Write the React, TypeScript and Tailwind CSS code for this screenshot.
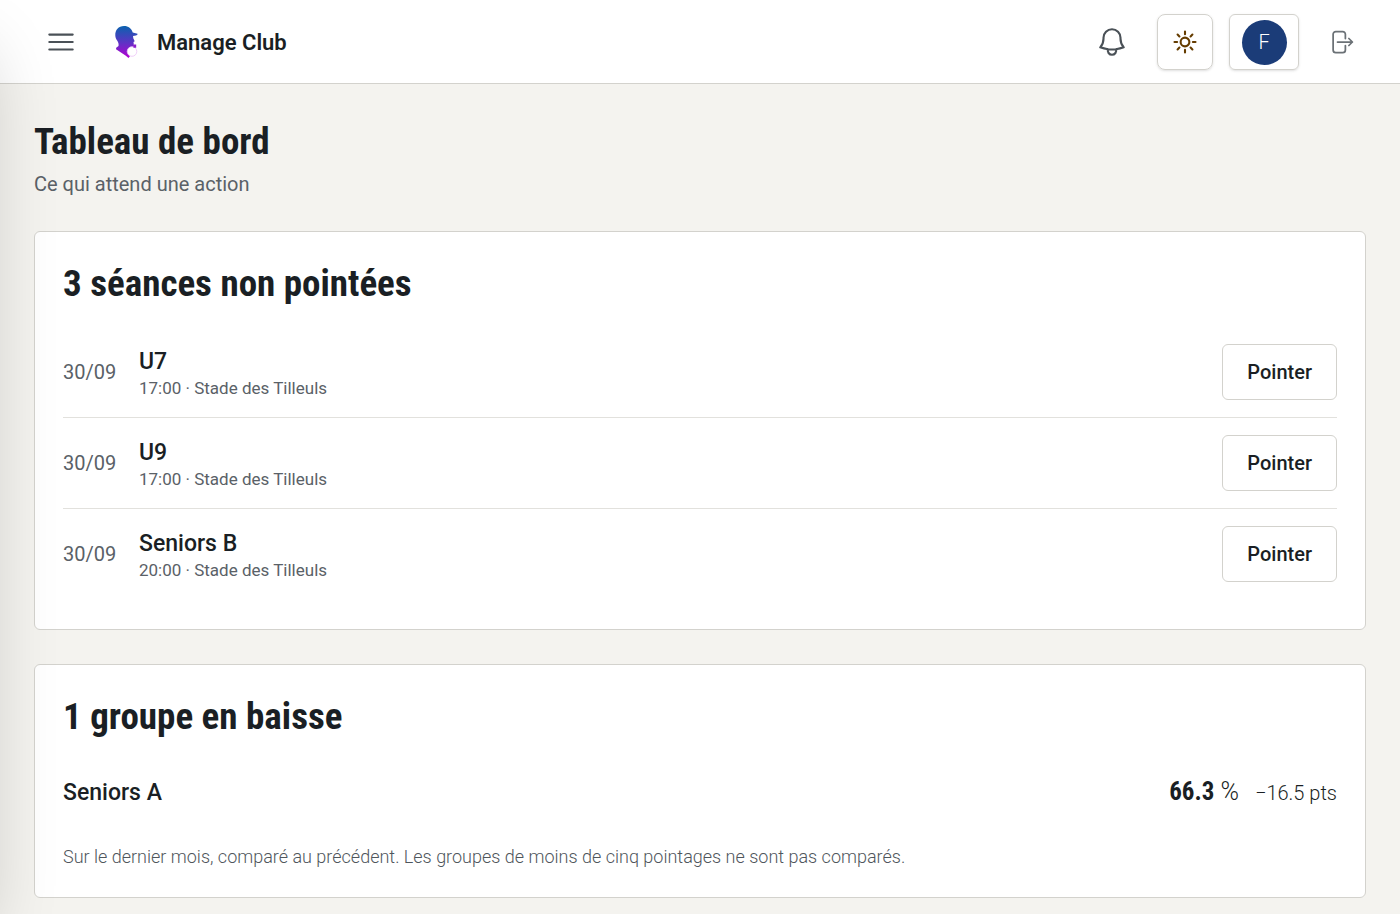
import {
  HiOutlineArrowRightOnRectangle,
  HiOutlineBars3,
  HiOutlineBell,
  HiOutlineSun,
} from 'react-icons/hi2'

const sessions = [
  { id: 1, date: '30/09', group: 'U7', time: '17:00', place: 'Stade des Tilleuls' },
  { id: 2, date: '30/09', group: 'U9', time: '17:00', place: 'Stade des Tilleuls' },
  { id: 3, date: '30/09', group: 'Seniors B', time: '20:00', place: 'Stade des Tilleuls' },
]

const headingFont = "font-['Roboto_Condensed','Liberation_Sans_Narrow',sans-serif]"

function Logo() {
  return (
    <svg viewBox="0 0 48 48" className="size-12" aria-hidden="true">
      <defs>
        <linearGradient id="logo" gradientUnits="userSpaceOnUse" x1="0" y1="8" x2="0" y2="40">
          <stop offset="0" stopColor="#0a62ae" />
          <stop offset="0.5" stopColor="#5a35c4" />
          <stop offset="1" stopColor="#b400d2" />
        </linearGradient>
      </defs>
      <path
        fill="url(#logo)"
        d="M13.300 17.500C13 12 16.500 8 22 8c4.500 0 7.500 2.500 8.700 6.500l4.800 1.300c.3 1-.6 1.700-3 1.900l-1.500.3.300 2.200 1.400 3-1.200.8.300 2.200-.8 1.300V34l-4.500 6-3-2.500-9.500-6.300.2-1.400 2.300-1.800c.4-2-.2-3.500-1.200-5.200-1.300-2-1.900-3.300-2-5.300Z"
      />
      <circle cx="30" cy="33.500" r="4.800" fill="#fff" stroke="#ecc4f8" strokeWidth="0.8" />
      <path fill="#8a1fcb" d="M30.800 26.500h3.400v3.300h-2.700Z" />
    </svg>
  )
}

function SiteHeader() {
  return (
    <header className="flex items-center justify-between border-b border-[#d3d2cd] bg-white pt-3.5 pr-8 pb-[13px] pl-11">
      <div className="flex items-center">
        <button type="button" aria-label="Menu" className="text-[#4a5157]">
          <HiOutlineBars3 className="size-[34px]" />
        </button>
        <a href="#" className="ml-6 flex items-center gap-[7px] text-[22px] font-semibold text-[#1a1f24]">
          <Logo />
          Manage Club
        </a>
      </div>
      <div className="flex items-center">
        <button type="button" aria-label="Notifications" className="mr-7 text-[#4a5157]">
          <HiOutlineBell className="size-[34px]" />
        </button>
        <button
          type="button"
          aria-label="Thème"
          className="mr-4 flex size-14 items-center justify-center rounded-lg border border-[#d3d2cd] text-[#653c00] shadow-sm"
        >
          <HiOutlineSun className="size-7" strokeWidth={1.8} />
        </button>
        <button
          type="button"
          aria-label="Profil"
          className="mr-7 flex h-14 w-[70px] items-center justify-center rounded-md border border-[#d3d2cd] shadow-sm"
        >
          <span className="flex size-[45px] items-center justify-center rounded-full bg-[#1b3c78] text-xl font-light text-white">
            F
          </span>
        </button>
        <button type="button" aria-label="Se déconnecter" className="mr-[13px] text-[#6b7176]">
          <HiOutlineArrowRightOnRectangle className="size-7" />
        </button>
      </div>
    </header>
  )
}

function Sessions() {
  return (
    <section className="mt-[31px] rounded-md border border-[#d3d2cd] bg-white px-7 pt-7 pb-[30px]">
      <h2 className={`${headingFont} text-[37px] leading-12 font-bold`}>3 séances non pointées</h2>
      <ul className="mt-[19px] divide-y divide-[#e2e1dd]">
        {sessions.map((session) => (
          <li key={session.id} className="flex items-center py-[17px]">
            <span className="w-[76px] text-xl text-[#5a6167]">{session.date}</span>
            <div className="flex-1 pt-1">
              <p className="text-[23px] leading-7 font-medium">{session.group}</p>
              <p className="text-[17px] leading-6 text-[#5a6167]">
                {session.time} · {session.place}
              </p>
            </div>
            <button
              type="button"
              className="h-14 rounded-md border border-[#d3d2cd] px-6 text-xl font-medium"
            >
              Pointer
            </button>
          </li>
        ))}
      </ul>
    </section>
  )
}

function DecliningGroups() {
  return (
    <section className="mt-[34px] rounded-md border border-[#d3d2cd] bg-white px-7 pt-7 pb-[26px]">
      <h2 className={`${headingFont} text-[37px] leading-12 font-bold`}>1 groupe en baisse</h2>
      <div className="mt-[33px] flex items-baseline justify-between">
        <p className="text-[23px] leading-9 font-medium">Seniors A</p>
        <p className="flex items-baseline gap-4 text-xl leading-9 font-light">
          <span className="text-[25px]">
            <strong className={`${headingFont} font-bold`}>66.3</strong> %
          </span>
          −16.5 pts
        </p>
      </div>
      <p className="mt-8 text-lg leading-7 font-light text-[#4f565c]">
        Sur le dernier mois, comparé au précédent. Les groupes de moins de cinq pointages ne sont pas comparés.
      </p>
    </section>
  )
}

export default function App() {
  return (
    <div className="min-h-screen bg-[#f4f3ef] font-['Roboto',sans-serif] text-[#1a1f24]">
      {/* closed drawer, only its shadow reaches the page */}
      <div className="pointer-events-none fixed inset-y-0 right-full z-10 w-80 shadow-[0_35px_70px_-17px_rgba(0,0,0,0.2)]" />
      <SiteHeader />
      <main className="px-[34px] pt-8 pb-4">
        <h1 className={`${headingFont} text-[37px] leading-[52px] font-bold`}>Tableau de bord</h1>
        <p className="text-xl leading-8 text-[#5a6167]">Ce qui attend une action</p>
        <Sessions />
        <DecliningGroups />
      </main>
    </div>
  )
}
